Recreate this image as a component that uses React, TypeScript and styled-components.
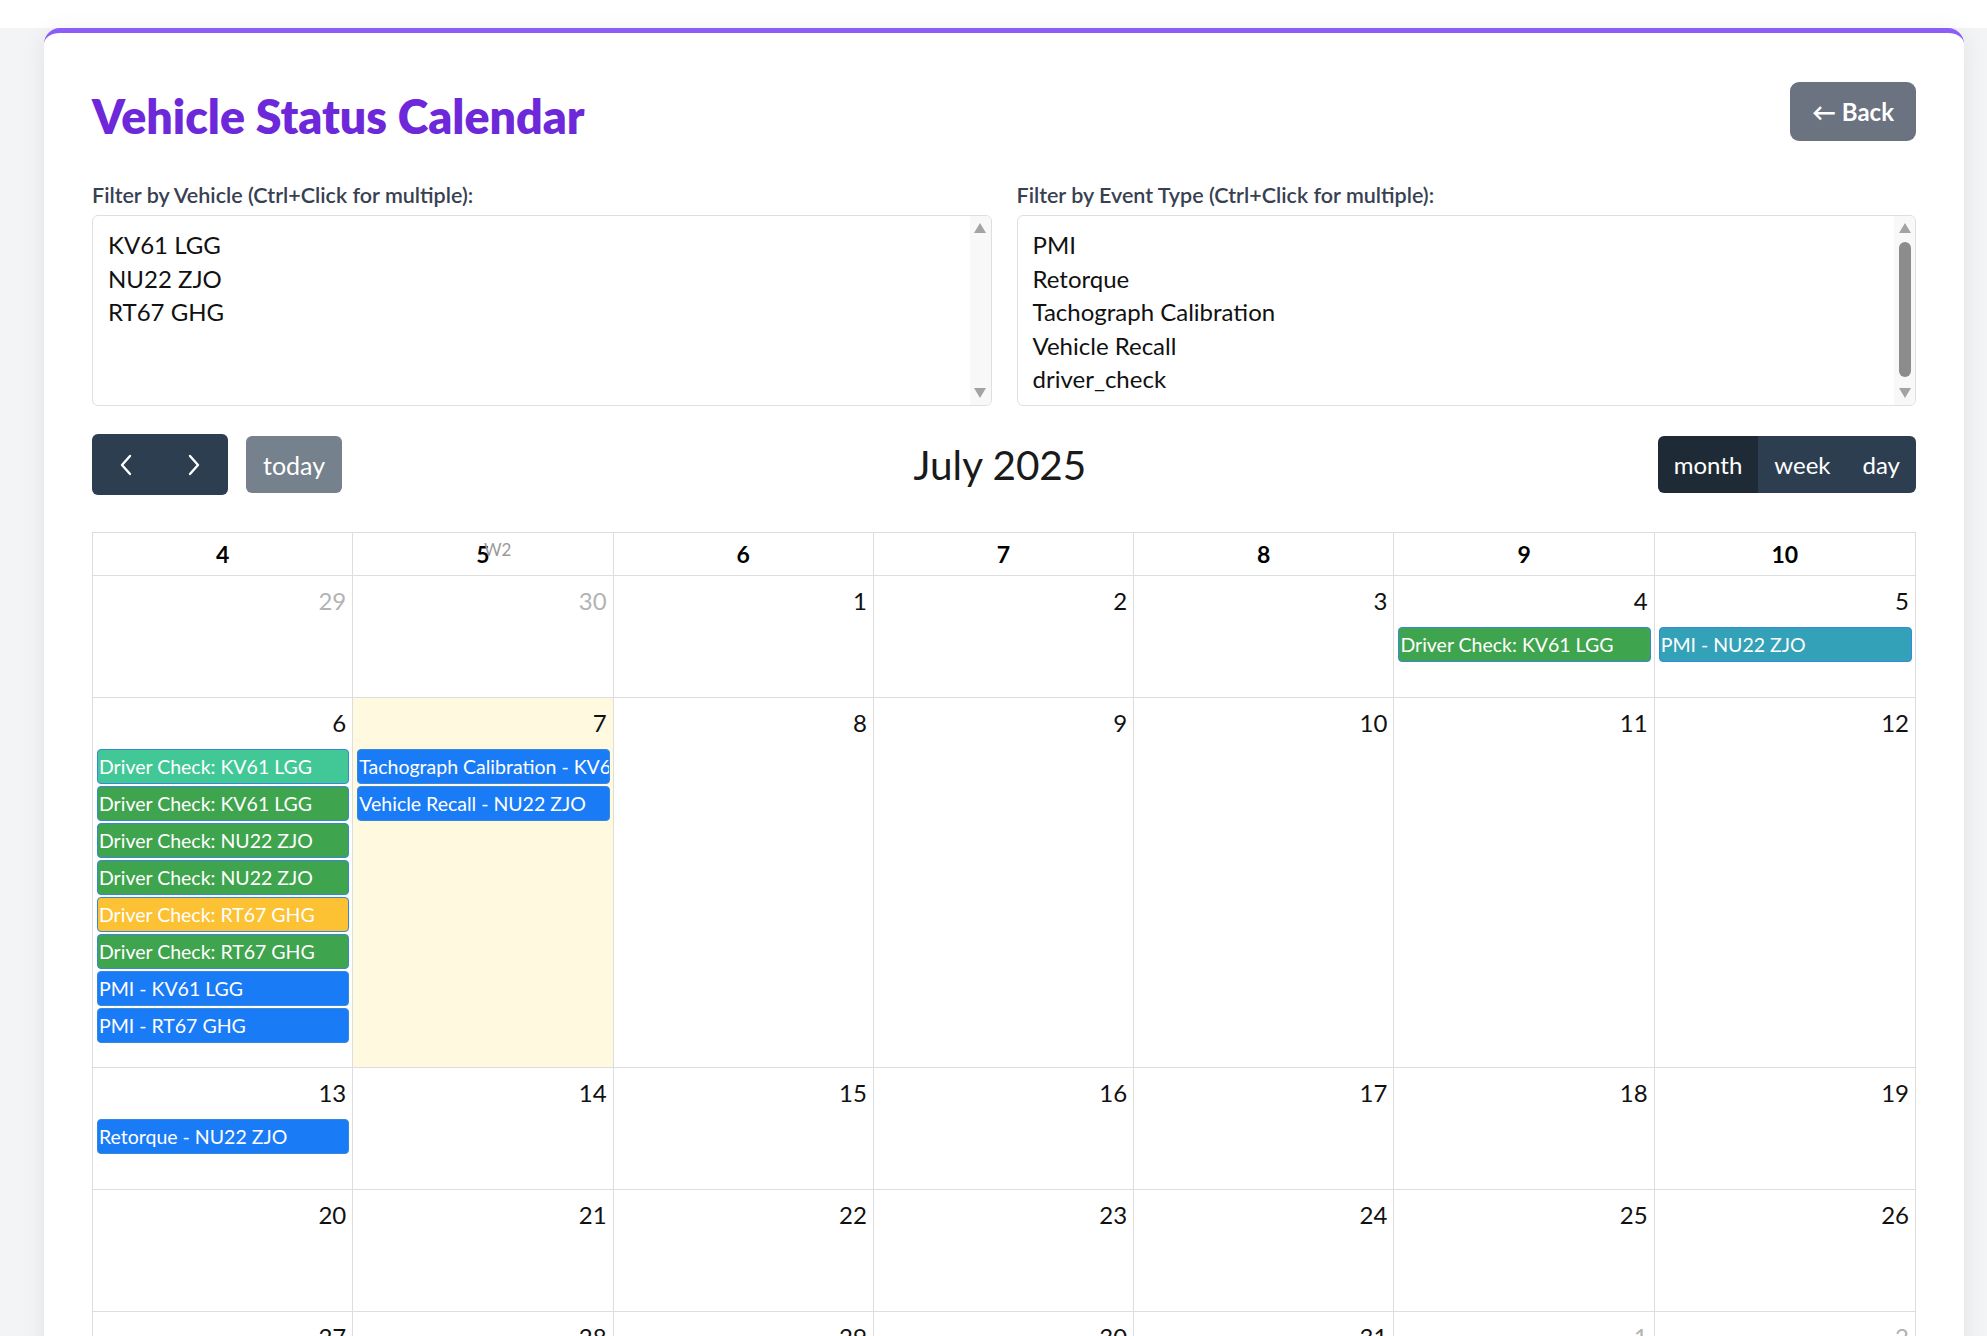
import React from "react";
import styled, { createGlobalStyle } from "styled-components";

const GlobalStyle = createGlobalStyle`
  html, body {
    margin: 0;
    padding: 0;
    overflow: hidden;
  }
  body {
    font-family: Lato, "Noto Sans", sans-serif;
    background: #f3f4f6;
    color: #111;
  }
`;

type CalEvent = { title: string; color: string };
type Day = { n: number; other?: boolean; today?: boolean; events?: CalEvent[] };

const GREEN = "#3fa44e";
const MINT = "#42c897";
const YELLOW = "#fdc134";
const BLUE = "#1a7bf7";
const TEAL = "#33a1b8";

const weeks: Day[][] = [
  [
    { n: 29, other: true },
    { n: 30, other: true },
    { n: 1 },
    { n: 2 },
    { n: 3 },
    { n: 4, events: [{ title: "Driver Check: KV61 LGG", color: GREEN }] },
    { n: 5, events: [{ title: "PMI - NU22 ZJO", color: TEAL }] },
  ],
  [
    {
      n: 6,
      events: [
        { title: "Driver Check: KV61 LGG", color: MINT },
        { title: "Driver Check: KV61 LGG", color: GREEN },
        { title: "Driver Check: NU22 ZJO", color: GREEN },
        { title: "Driver Check: NU22 ZJO", color: GREEN },
        { title: "Driver Check: RT67 GHG", color: YELLOW },
        { title: "Driver Check: RT67 GHG", color: GREEN },
        { title: "PMI - KV61 LGG", color: BLUE },
        { title: "PMI - RT67 GHG", color: BLUE },
      ],
    },
    {
      n: 7,
      today: true,
      events: [
        { title: "Tachograph Calibration - KV61 LGG", color: BLUE },
        { title: "Vehicle Recall - NU22 ZJO", color: BLUE },
      ],
    },
    { n: 8 },
    { n: 9 },
    { n: 10 },
    { n: 11 },
    { n: 12 },
  ],
  [
    { n: 13, events: [{ title: "Retorque - NU22 ZJO", color: BLUE }] },
    { n: 14 },
    { n: 15 },
    { n: 16 },
    { n: 17 },
    { n: 18 },
    { n: 19 },
  ],
  [{ n: 20 }, { n: 21 }, { n: 22 }, { n: 23 }, { n: 24 }, { n: 25 }, { n: 26 }],
  [
    { n: 27 },
    { n: 28 },
    { n: 29 },
    { n: 30 },
    { n: 31 },
    { n: 1, other: true },
    { n: 2, other: true },
  ],
];

const headers = ["4", "5", "6", "7", "8", "9", "10"];

const Chevron = ({ dir }: { dir: "left" | "right" }) => (
  <svg width="14" height="22" viewBox="0 0 14 22">
    <polyline
      points={dir === "left" ? "11,2 3,11 11,20" : "3,2 11,11 3,20"}
      fill="none"
      stroke="#fff"
      strokeWidth="2.4"
      strokeLinecap="round"
      strokeLinejoin="round"
    />
  </svg>
);

const ListBox = ({ items, thumb }: { items: string[]; thumb?: boolean }) => (
  <Box>
    <Options>
      {items.map((it) => (
        <Option key={it}>{it}</Option>
      ))}
    </Options>
    <Track>
      <ArrowUp />
      <ThumbArea>{thumb && <Thumb />}</ThumbArea>
      <ArrowDown />
    </Track>
  </Box>
);

const App: React.FC = () => {
  return (
    <>
      <GlobalStyle />
      <TopStrip />
      <Shell>
        <Card>
          <Header>
            <Title>Vehicle Status Calendar</Title>
            <BackButton>← Back</BackButton>
          </Header>

          <Filters>
            <div>
              <Label>Filter by Vehicle (Ctrl+Click for multiple):</Label>
              <ListBox items={["KV61 LGG", "NU22 ZJO", "RT67 GHG"]} />
            </div>
            <div>
              <Label>Filter by Event Type (Ctrl+Click for multiple):</Label>
              <ListBox
                thumb
                items={["PMI", "Retorque", "Tachograph Calibration", "Vehicle Recall", "driver_check"]}
              />
            </div>
          </Filters>

          <Toolbar>
            <Chunk>
              <Group>
                <NavButton>
                  <Chevron dir="left" />
                </NavButton>
                <NavButton>
                  <Chevron dir="right" />
                </NavButton>
              </Group>
              <TodayButton>today</TodayButton>
            </Chunk>
            <MonthTitle>July 2025</MonthTitle>
            <Group>
              <ViewButton active>month</ViewButton>
              <ViewButton>week</ViewButton>
              <ViewButton>day</ViewButton>
            </Group>
          </Toolbar>

          <Grid>
            <HeadRow>
              {headers.map((h, i) => (
                <HeadCell key={h}>
                  {h}
                  {i === 1 && <WeekNo>W2</WeekNo>}
                </HeadCell>
              ))}
            </HeadRow>
            {weeks.map((week, wi) => (
              <WeekRow key={wi}>
                {week.map((d, di) => (
                  <DayCell key={di} today={d.today}>
                    <DayNumber other={d.other}>{d.n}</DayNumber>
                    {d.events?.map((e, ei) => (
                      <EventBar key={ei} style={{ background: e.color }}>
                        {e.title}
                      </EventBar>
                    ))}
                  </DayCell>
                ))}
              </WeekRow>
            ))}
          </Grid>
        </Card>
      </Shell>
    </>
  );
};

export default App;

const TopStrip = styled.div`
  height: 28px;
  background: #fff;
`;

const Shell = styled.div`
  padding: 0 23px 0 44px;
  background: #f3f4f6;
`;

const Card = styled.div`
  background: #fff;
  border-top: 5px solid #8b5cf6;
  border-radius: 16px 16px 0 0;
  box-shadow: 0 4px 24px rgba(0, 0, 0, 0.08);
  padding: 49px 48px 48px;
`;

const Header = styled.div`
  display: flex;
  justify-content: space-between;
  align-items: center;
`;

const Title = styled.h1`
  margin: 0;
  padding-top: 8px;
  font-size: 46.5px;
  font-weight: 800;
  color: #6d28d9;
  line-height: 50px;
`;

const BackButton = styled.button`
  height: 59px;
  padding: 0 22px;
  border: none;
  border-radius: 9px;
  background: #6b7280;
  color: #fff;
  font-family: inherit;
  font-size: 24px;
  font-weight: 700;
`;

const Filters = styled.div`
  display: grid;
  grid-template-columns: 1fr 1fr;
  gap: 25px;
  margin-top: 39px;
`;

const Label = styled.label`
  display: block;
  font-size: 21.5px;
  font-weight: 600;
  color: #374151;
  line-height: 30px;
  margin-bottom: 5px;
`;

const Box = styled.div`
  display: flex;
  height: 191px;
  box-sizing: border-box;
  border: 1px solid #dfdfdf;
  border-radius: 6px;
  overflow: hidden;
`;

const Options = styled.div`
  flex: 1;
  padding: 12px 15px;
`;

const Option = styled.div`
  font-size: 24px;
  line-height: 33.5px;
  color: #111;
`;

const Track = styled.div`
  width: 21px;
  background: #f8f8f8;
  display: flex;
  flex-direction: column;
  align-items: center;
  padding: 7px 0;
  box-sizing: border-box;
`;

const ArrowUp = styled.div`
  width: 0;
  height: 0;
  border-left: 6px solid transparent;
  border-right: 6px solid transparent;
  border-bottom: 10px solid #a3a3a3;
`;

const ArrowDown = styled.div`
  width: 0;
  height: 0;
  border-left: 6px solid transparent;
  border-right: 6px solid transparent;
  border-top: 10px solid #a3a3a3;
`;

const ThumbArea = styled.div`
  flex: 1;
  width: 100%;
  display: flex;
  justify-content: center;
  padding: 9px 0;
  box-sizing: border-box;
`;

const Thumb = styled.div`
  width: 12px;
  border-radius: 6px;
  background: #8c8c8c;
  margin-bottom: 2px;
`;

const Toolbar = styled.div`
  display: flex;
  justify-content: space-between;
  align-items: center;
  margin: 28px 0 37px;
`;

const Chunk = styled.div`
  display: flex;
  align-items: center;
  gap: 18px;
`;

const Group = styled.div`
  display: flex;
  border-radius: 6px;
  overflow: hidden;
`;

const NavButton = styled.button`
  width: 68px;
  height: 61px;
  border: none;
  background: #2c3e50;
  display: flex;
  align-items: center;
  justify-content: center;
  padding: 0;
`;

const TodayButton = styled.button`
  height: 57px;
  padding: 0 17px;
  border: none;
  border-radius: 6px;
  background: #2c3e50;
  opacity: 0.65;
  color: #fff;
  font-family: inherit;
  font-size: 25px;
`;

const MonthTitle = styled.h2`
  margin: 0;
  font-size: 40.5px;
  font-weight: 400;
  color: #1a1a1a;
`;

const ViewButton = styled.button<{ active?: boolean }>`
  height: 57px;
  padding: 0 16px;
  border: none;
  background: ${(p) => (p.active ? "#1e2b37" : "#2c3e50")};
  color: #fff;
  font-family: inherit;
  font-size: 24px;
`;

const Grid = styled.div`
  border: 1px solid #ddd;
  border-bottom: none;
`;

const HeadRow = styled.div`
  display: grid;
  grid-template-columns: repeat(7, 1fr);
  border-bottom: 1px solid #ddd;
`;

const HeadCell = styled.div`
  position: relative;
  height: 42px;
  line-height: 42px;
  text-align: center;
  font-size: 23px;
  font-weight: 700;
  color: #000;
  border-right: 1px solid #ddd;
  &:last-child {
    border-right: none;
  }
`;

const WeekNo = styled.span`
  position: absolute;
  left: calc(50% + 1px);
  top: 8px;
  line-height: 18px;
  font-size: 17px;
  font-weight: 400;
  color: #9a9a9a;
`;

const WeekRow = styled.div`
  display: grid;
  grid-template-columns: repeat(7, 1fr);
  border-bottom: 1px solid #ddd;
`;

const DayCell = styled.div<{ today?: boolean }>`
  min-height: 121px;
  padding-bottom: 22px;
  box-sizing: border-box;
  background: ${(p) => (p.today ? "rgba(255, 220, 40, 0.15)" : "transparent")};
  border-right: 1px solid #ddd;
  min-width: 0;
  &:last-child {
    border-right: none;
  }
`;

const DayNumber = styled.div<{ other?: boolean }>`
  height: 44px;
  padding: 7px 6px 0;
  box-sizing: border-box;
  text-align: right;
  font-size: 24px;
  line-height: 36px;
  color: ${(p) => (p.other ? "#b3b3b3" : "#111")};
  margin-bottom: 7px;
`;

const EventBar = styled.div`
  margin: 0 3px 2px 4px;
  height: 35px;
  box-sizing: border-box;
  border: 1px solid #3788d8;
  border-radius: 4px;
  color: #fff;
  font-size: 19.5px;
  line-height: 33px;
  padding: 0 1px;
  white-space: nowrap;
  overflow: hidden;
`;
